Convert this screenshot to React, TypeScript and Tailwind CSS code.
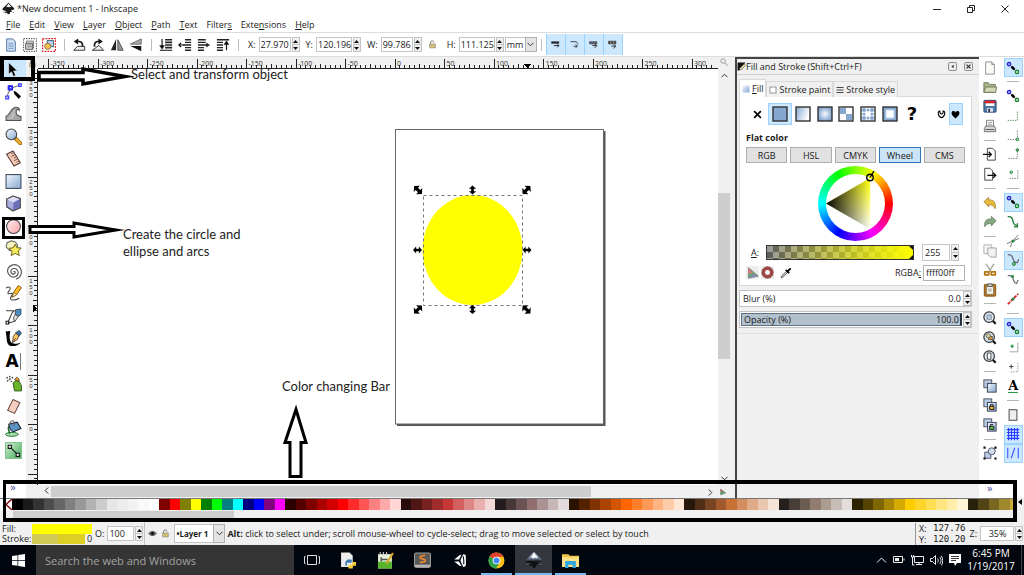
import type { ReactNode } from "react"
import clsx from "clsx"

const MENU = [
  ["", "F", "ile"],
  ["", "E", "dit"],
  ["", "V", "iew"],
  ["", "L", "ayer"],
  ["", "O", "bject"],
  ["", "P", "ath"],
  ["", "T", "ext"],
  ["Filter", "s", ""],
  ["Exte", "n", "sions"],
  ["", "H", "elp"],
]

const PALETTE =
  "000000 1a1a1a 333333 4d4d4d 666666 808080 999999 b3b3b3 cccccc e6e6e6 ececec f2f2f2 f9f9f9 ffffff 800000 ff0000 808000 ffff00 008000 00ff00 008080 00ffff 000080 0000ff 800080 ff00ff 2b0000 550000 800000 aa0000 d40000 ff0000 ff2a2a ff5555 ff8080 ffaaaa ffd5d5 280b0b 501616 782121 a02c2c c83737 d35f5f de8787 e9afaf f4d7d7 241c1c 483737 6c5353 916f6f ac9393 c8b7b7 e3dbdb 2b1100 552200 803300 aa4400 d45500 ff6600 ff7f2a ff9955 ffb380 ffccaa ffe6d5 28170b 502d16 784421 a05a2c c87137 d38d5f deaa87 e9c6af f4e3d7 241f1c 483e37 6c5d53 917c6f ac9d93 c8beb7 e3dedb 2b2200 554400 806600 aa8800 d4aa00 ffcc00 ffd42a ffdd55 ffe680 ffeeaa fff6d5 28220b 504416 786721 a0892c c8ab37".split(
    " "
  )

/* ---------- drawings ---------- */

const Svg = ({ size = 16, children }: { size?: number; children: ReactNode }) => (
  <svg width={size} height={size} viewBox="0 0 16 16" fill="none" stroke="#333" aria-hidden="true" className="shrink-0">
    {children}
  </svg>
)

const Gradients = () => (
  <svg width="0" height="0" className="absolute" aria-hidden="true">
    <defs>
      <linearGradient id="blue" x1="0" y1="0" x2="1" y2="1">
        <stop offset="0" stopColor="#f4f9ff" />
        <stop offset="1" stopColor="#85a9cf" />
      </linearGradient>
      <linearGradient id="fade" x1="0" y1="0" x2="1" y2="0.4">
        <stop offset="0" stopColor="#86aad2" />
        <stop offset="1" stopColor="#fff" />
      </linearGradient>
      <radialGradient id="glow">
        <stop offset="0" stopColor="#f4f9ff" />
        <stop offset="1" stopColor="#86a8d0" />
      </radialGradient>
      <linearGradient id="pink" x1="0" y1="0" x2="1" y2="1">
        <stop offset="0" stopColor="#fff0f0" />
        <stop offset="1" stopColor="#f9a3a8" />
      </linearGradient>
      <linearGradient id="green" x1="0" y1="0" x2="1" y2="1">
        <stop offset="0" stopColor="#d8f2da" />
        <stop offset="1" stopColor="#3fa855" />
      </linearGradient>
      <linearGradient id="yellowWhite" x1="0" y1="0" x2="0" y2="1">
        <stop offset="0" stopColor="#ff0" />
        <stop offset="1" stopColor="#fff" />
      </linearGradient>
      <linearGradient id="blackClear" x1="0" y1="0" x2="1" y2="0">
        <stop offset="0" stopColor="#000" />
        <stop offset="1" stopColor="#000" stopOpacity="0" />
      </linearGradient>
      <linearGradient id="ink" x1="0" y1="0" x2="0" y2="1">
        <stop offset="0" stopColor="#e8f0fa" />
        <stop offset="0.45" stopColor="#55657c" />
        <stop offset="0.6" stopColor="#111" />
      </linearGradient>
    </defs>
  </svg>
)

const InkscapeLogo = ({ size = 13, fill = "#1b1b1b" }: { size?: number; fill?: string }) => (
  <Svg size={size}>
    <path
      d="M8 .8 14.7 7.4c1 1.1.4 2-1 2.2l-2.6.5c-.9.3 1.8.8 1.3 1.5-.5.6-2 .3-2.5.8-.4.5.3 1.2-.2 1.8-.6.8-1.6 1.2-2.4.8-.8-.3-.4-1.2-1-1.6-.7-.4-2.8-.1-3-1 0-.6 2.8-.4 2.6-1.2-.2-.6-3.2-.6-4.6-1.2-1-.5-.8-1.6 0-2.5z"
      fill={fill}
      stroke="none"
    />
    <path d="m8 2.2 3.4 3.6-1.6.7-1-1-1 1.3-1.2-1-1.8.7z" fill="#fff" stroke="none" />
    <path d="M13 12.2h2.2l-1 1zM1.2 12.4l1.7-.3.2.9z" fill={fill} stroke="none" />
  </Svg>
)

const TOOLS: [string, ReactNode][] = [
  ["Selector", <path d="M3.500 1.500v11l2.600-2.400 1.900 4.400 2-.9-1.900-4.300h3.600z" fill="#000" stroke="#fff" strokeWidth=".5" />],
  [
    "Node editor",
    <>
      <path d="M2 14C2.500 8 5 3 14.500 2.500" stroke="#777" />
      <path d="m8 7.500 2 .5 5 4.500-2 2.500-4-4.500z" fill="#000" stroke="none" />
      <path d="M3 2.500h4v4H3z" fill="#22f" stroke="#22f" />
      <path d="M.7 12.200h2.800V15H.7zM12.800.800h2.500v2.500h-2.500z" fill="#bbf" stroke="#33f" />
      <path d="M4.500 4.500h1.500" stroke="#fff" />
    </>,
  ],
  [
    "Tweak",
    <>
      <path d="M1 14.500v-4C4 9.500 5 5 8 3c3-1.800 6-.5 5.500 2-1-1.500-3-1-3 1.500 0 2.500 2 4 4.500 4.200v3.800z" fill="#a5a5a5" stroke="#555" />
      <path d="M3 13c3-1 4-5 6-8M6 13c1.500-1 2-3 3-5" stroke="#ddd" strokeWidth=".8" />
    </>,
  ],
  [
    "Zoom",
    <>
      <path d="m10 10 4.500 4.500" stroke="#9a6a10" strokeWidth="3.600" strokeLinecap="round" />
      <path d="m10.800 10.800 3.500 3.500" stroke="#f6b030" strokeWidth="2.200" strokeLinecap="round" />
      <circle cx="6" cy="6" r="5" fill="url(#blue)" stroke="#444" />
    </>,
  ],
  [
    "Measure",
    <>
      <path d="m1.500 4 6-3 7 11-6 3z" fill="#f2c7b4" stroke="#5a3d33" />
      <path d="m8 2.500-2 1M9.200 4.500l-3 1.500M10.500 6.500l-2 1M11.700 8.500l-3 1.500M13 10.500l-2 1" stroke="#5a3d33" strokeWidth=".8" />
    </>,
  ],
  ["Rectangle", <rect x="1" y="1.500" width="14" height="13" fill="url(#blue)" stroke="#3c4a5c" />],
  [
    "3D box",
    <>
      <path d="m1.500 4 6-3L14.500 3.500v8.500l-7 3-6-4z" fill="#a9acdf" stroke="#444" />
      <path d="m1.500 4 6-3L14.500 3.500 8 7z" fill="#dcdcf5" stroke="none" />
      <path d="m8 7 6.500-3.500V12L7.500 15z" fill="#6b70b8" stroke="none" />
      <path d="m1.500 4 6-3L14.500 3.500v8.500l-7 3-6-4z" stroke="#555" />
    </>,
  ],
  ["Ellipse", <circle cx="8" cy="8" r="6.500" fill="url(#pink)" stroke="#444" />],
  [
    "Star",
    <>
      <path d="m6 .8 4 1.200 2 3.500-2.500 4-5 .5L1 6.500 2 2.500z" fill="#faf6c0" stroke="#666" />
      <path d="m9.500 4 1.800 3.300 4 .2-2.800 2.900 1 4.200-3.800-1.900-3.900 1.900.9-4.100-3-2.600 4.100-.6z" fill="#f8ee58" stroke="#665c20" strokeWidth=".9" />
    </>,
  ],
  [
    "Spiral",
    <path
      d="M8 8.500c.5-1 1.800-.3 1.500.8C9.200 10.800 7 11 6 9.600 4.900 8 6 5.500 8 5.200c2.800-.4 4.800 2 4.300 4.600C11.800 12.500 8.900 14 6.400 13 3.200 11.700 1.500 8 3 5 4.500 2 8.500.8 11.500 2.200c3 1.400 4.500 5 3.700 8.300-.8 2.500-2.700 4-4.700 4.700"
      stroke="#555"
      strokeWidth="1.100"
    />,
  ],
  [
    "Pencil",
    <>
      <path d="M1 3c2-2 5-1 3.500 1.500C3.500 6 2 7.500 3 8c2 .8 4-1 4 .5C7 10 4 12 5.500 13.500c2 1.500 6 0 8-1" stroke="#444" />
      <path d="M7 11.500 8 7l4.500-6.500 3 2L11 9z" fill="#fb2" stroke="#744c00" strokeWidth=".8" />
      <path d="M7 11.500 8 7l3 2z" fill="#fff0cc" stroke="#744c00" strokeWidth=".6" />
    </>,
  ],
  [
    "Pen",
    <>
      <path d="M1 2.500h8c-4 1.500-3.500 8-7 11.500M3 14c3-.5 5-.5 6-2" stroke="#444" />
      <path d="M1 12.500h2.500V15H1z" fill="#fff" stroke="#111" />
      <path d="m10 1.500 5-.5v5L12.500 8 9.500 6z" fill="#4f8fc0" stroke="#234" strokeWidth=".7" />
      <path d="m9.500 6 3 2L9 13 8 9.500z" fill="#e8e8e8" stroke="#333" strokeWidth=".8" />
    </>,
  ],
  [
    "Calligraphy",
    <>
      <path d="M.5 1.500 5 1c-1 5-1 10 2 11.500 2 .8 5 .5 8-1-3 4-9 4.500-11.500 2.500C1 12 2 6 .5 1.500z" fill="#000" stroke="none" />
      <path d="m10 2.500 3.500-2L15.500 3 13 6z" fill="#3a73a8" stroke="#234" strokeWidth=".7" />
      <path d="M7 12 7.800 6 10 3l3 2.500L11.500 9z" fill="#f8c860" stroke="#533" strokeWidth=".8" />
      <path d="m7.300 11.500 2.700-4" stroke="#533" strokeWidth=".7" />
    </>,
  ],
  ["Text", <></>],
  [
    "Spray",
    <>
      <path d="m7.500 7.500 3-2.500 3 1.500 2 3.500v5H9z" fill="#69b52a" stroke="#2b4d10" strokeWidth=".8" />
      <path d="M9 4.500 11 2l2 1.500.5 2.500z" fill="#f5a623" stroke="#333" strokeWidth=".7" />
      <g fill="#444" stroke="none">
        <circle cx="2" cy="2.500" r=".8" />
        <circle cx="4.500" cy="1.500" r=".8" />
        <circle cx="4.500" cy="4" r=".9" />
        <circle cx="7" cy="2.500" r=".8" />
        <circle cx="2.500" cy="5.500" r=".8" />
        <circle cx="6" cy="6" r=".7" />
      </g>
    </>,
  ],
  ["Eraser", <path d="m7.500 1.500 6.500 3-5 10-6.500-3z" fill="#f6cfc0" stroke="#6a4c40" />],
  [
    "Paint bucket",
    <>
      <ellipse cx="6.500" cy="13.500" rx="6" ry="1.800" fill="#a8e6b0" stroke="#1f6a30" strokeWidth=".9" />
      <path d="M4 13c1-3-3-5 .5-7.500" stroke="#1f6a30" strokeWidth="1.500" />
      <path d="m3.500 4 8-2 3.500 6-7 3c-2 0-4-3-4.500-7z" fill="#5a95c5" stroke="#223" />
      <path d="M4.500 5C4 1.500 7-.5 8.500 1.500V6" stroke="#666" />
    </>,
  ],
  [
    "Gradient",
    <>
      <rect x=".5" y=".5" width="15" height="15" fill="url(#green)" stroke="#7fc58b" />
      <path d="m4.500 4.500 7 7" stroke="#111" />
      <path d="M3 3h3v3H3zM10.500 10.500h3v3h-3z" fill="#fff" stroke="#111" />
    </>,
  ],
]

const Page = <path d="M3 1h7l3 3v11H3z" fill="#fbfbf6" stroke="#888" />
const Lens = (
  <>
    <path d="m11 11 3.500 3.500" stroke="#111" strokeWidth="2.500" />
    <circle cx="7" cy="7" r="6" fill="#dde8f2" stroke="#333" strokeWidth="1.400" />
  </>
)
const Stack = (
  <>
    <rect x="1" y="1" width="9" height="9" fill="#b7cde6" stroke="#445" />
    <rect x="5" y="5" width="10" height="10" fill="url(#blue)" stroke="#334" />
  </>
)

// null draws a separator line
const COMMANDS: ([string, ReactNode] | null)[] = [
  ["New", <>{Page}<path d="M10 1v3h3" stroke="#888" /></>],
  [
    "Open",
    <>
      <path d="M1 3h5l1.500 2H14v9H1z" fill="#a9b48b" stroke="#6b7550" />
      <path d="M3 8h12.500l-1 6H1z" fill="#d3dab8" stroke="#6b7550" />
    </>,
  ],
  [
    "Save",
    <>
      <rect x="1" y="1.500" width="14" height="13.500" rx="1" fill="#4f77a8" stroke="#26456e" />
      <path d="M2 2h12v3H2z" fill="#e22020" stroke="none" />
      <path d="M3 5h10v3H3z" fill="#fff" stroke="none" />
      <path d="M4.500 10.500h7v4h-7z" fill="#dde4ec" stroke="none" />
      <path d="M6 11.500h2v3H6z" fill="#223" stroke="none" />
    </>,
  ],
  [
    "Print",
    <>
      <path d="M4 1.500h8v7H4z" fill="#fff" stroke="#777" />
      <path d="M5.500 4h5M5.500 6h5" stroke="#999" />
      <path d="m3 8-1.500 3v3.500h13V11L13 8z" fill="#d5d5d5" stroke="#666" />
      <path d="M3 12h10" stroke="#555" />
    </>,
  ],
  null,
  ["Import", <><path d="M5 1.500h6l3 3V15H5z" fill="#fff" stroke="#333" /><path d="M0 8.500h9M6.500 5.500l3 3-3 3" stroke="#111" strokeWidth="1.500" /></>],
  ["Export", <><path d="M2 1.500h6l3 3V15H2z" fill="#fff" stroke="#333" /><path d="M5 9.500h9M11.500 6.500l3 3-3 3" stroke="#111" strokeWidth="1.500" /></>],
  null,
  ["Undo", <path d="M1 6.500 6.500 1.500v3C12 4 15 7 14 14.500c-1.500-3.500-4-5-7.500-4.500v2.500z" fill="#e8b93a" stroke="#97751c" strokeWidth=".8" />],
  ["Redo", <path d="M15 6.500 9.500 1.500v3C4 4 1 7 2 13.500 3.500 10.500 6 9.500 9.500 10v2.500z" fill="#86a884" stroke="#5d7c5c" strokeWidth=".8" />],
  null,
  ["Copy", <><path d="M1 1h9v10H1z" fill="#f5f5f5" stroke="#aaa" /><path d="M5.500 4.500H15V15H9l-3.500-3z" fill="#f2f2f2" stroke="#999" /></>],
  [
    "Cut",
    <>
      <path d="m3.500 1 6 9.500M12.500 1l-6 9.500" stroke="#a9a9a0" strokeWidth="1.600" />
      <path d="M2 10h4.500v3.500H2zM9.500 10H14v3.500H9.500z" stroke="#b87516" strokeWidth="2" strokeLinejoin="round" />
    </>,
  ],
  [
    "Paste",
    <>
      <rect x="1.500" y="1.500" width="13" height="13.500" rx="1" fill="#b47a24" stroke="#7a4c0c" />
      <path d="M4 4h8v9H4z" fill="#f5f2ea" stroke="#8a7a60" />
      <path d="M5.500 1h5v3h-5z" fill="#ccc" stroke="#555" />
      <path d="M6 7h4M6 9h4" stroke="#999" />
    </>,
  ],
  null,
  ["Zoom selection", <>{Lens}<path d="M4.500 4.500h5v5h-5z" fill="#b9cde0" stroke="#889" /></>],
  ["Zoom drawing", <>{Lens}<rect x="6.500" y="6" width="4" height="4" fill="#e8a838" stroke="#333" strokeWidth=".8" /><circle cx="6" cy="5.500" r="2.500" fill="#ddd09a" stroke="#444" strokeWidth=".8" /></>],
  ["Zoom page", <>{Lens}<path d="M5 3.500h4v7H5z" fill="#fff" stroke="#333" /></>],
  null,
  ["Duplicate", Stack],
  ["Clone", <>{Stack}<path d="M7.500 9.500h5V13h-5z" fill="#f6b632" stroke="#111" /><path d="M8.500 9.500v-2h3v2" stroke="#111" /></>],
  ["Unlink clone", <>{Stack}<path d="M7.500 9.500h5V13h-5z" fill="#62c04b" stroke="#111" /><path d="M8.500 9.500v-2h3" stroke="#111" /></>],
  null,
  [
    "Group",
    <>
      <path d="M2 7h7v7H2z" fill="#b9cde6" stroke="#446" />
      <circle cx="10" cy="6" r="4" fill="#cfdcec" stroke="#446" />
      <path d="M.5.5h2.500v2.500H.5zM13 .5h2.500V3H13zM.5 13H3v2.500H.5zM13 13h2.500v2.500H13z" fill="#111" stroke="none" />
    </>,
  ],
]

const SnapLink = (
  <>
    <path d="m4 4 8 8" stroke="#222" />
    <path d="m6.500 6.500 3 3" stroke="#000" strokeWidth="3" />
    <circle cx="3.500" cy="3.500" r="2" fill="#99f" stroke="#22c" strokeWidth="1.300" />
    <circle cx="12.500" cy="12.500" r="2" fill="#9d9" stroke="#1b7a35" strokeWidth="1.300" />
  </>
)
const dots = { stroke: "#667", strokeDasharray: "1.500 1.300" }

const SNAPS: ([string, ReactNode, boolean?] | null)[] = [
  ["Enable snapping", SnapLink, true],
  null,
  ["Snap bounding boxes", SnapLink],
  ["Snap box edges", <path d="M13 3v10H2" {...dots} stroke="#4c7a4c" />],
  ["Snap box corners", <><path d="M13 3v10H2" {...dots} /><circle cx="13" cy="13" r="1.600" fill="#9d9" stroke="#1b7a35" /></>],
  ["Snap edge midpoints", <><path d="M13 5v8H2" {...dots} /><circle cx="13" cy="3.500" r="1.500" fill="#6a6" stroke="#1b7a35" /></>],
  ["Snap box centers", <><path d="M13.500 4v9H4" {...dots} /><circle cx="6" cy="6" r="1.500" fill="#9d9" stroke="#1b7a35" /></>],
  null,
  ["Snap nodes", SnapLink, true],
  ["Snap paths", <path d="M2 2c9-1 3 9 10 10M9 13.500h4V9.500" stroke="#1b7a35" strokeWidth="1.500" />],
  ["Snap intersections", <><path d="M1 11 15 5M5 15C6 9 10 6 14 1" stroke="#666" /><circle cx="8" cy="8" r="1.800" fill="#2a8a45" stroke="none" /></>],
  ["Snap cusp nodes", <><path d="M2 2c9-1 3 9 11 9l1.500-4" stroke="#667" strokeWidth="1.500" /><circle cx="9" cy="12.500" r="1.800" fill="#7c7" stroke="#1b7a35" /></>, true],
  ["Snap smooth nodes", <><path d="M2 3c9-1 4 8 10 9l2-4" stroke="#667" strokeWidth="1.300" /><rect x="6" y="2.500" width="3" height="3" fill="#2a8a45" stroke="none" /></>],
  ["Snap midpoints", <><path d="M2 14 14 2" stroke="#c22" strokeWidth="2" strokeDasharray="4 1" /><circle cx="8" cy="8" r="1.800" fill="#2a8a45" stroke="none" /></>],
  null,
  ["Snap others", SnapLink, true],
  ["Snap object centers", <><path d="M13.500 3v10.500H4" stroke="#999" /><path d="M7 5v4M5 7h4" stroke="#2a9a45" strokeWidth="1.500" /></>],
  ["Snap rotation centers", <><path d="M13.500 3v10.500H4" {...dots} stroke="#888" /><path d="M6 5v5M3.500 7.500h5" stroke="#333" /></>],
  ["Snap text baselines", <></>],
  null,
  ["Snap page border", <rect x="3.500" y="2" width="9" height="12" fill="#eee" stroke="#333" />],
  ["Snap grids", <path d="M3 1v14M6.300 1v14M9.700 1v14M13 1v14M1 3h14M1 6.300h14M1 9.700h14M1 13h14" stroke="#2a3cff" strokeWidth="1.300" />, true],
  ["Snap guides", <path d="M2 2v12M14 2v12M6 14l4-12" stroke="#3a4cff" strokeWidth="1.200" />, true],
]

const TOP_ICONS: [string, ReactNode][][] = [
  [
    ["Select all in layers", <><path d="M3 1h7l3 3v11H3z" fill="#cfe0f5" stroke="#4a6c9a" /><path d="M5 6h6M5 8h6M5 10h6M5 12h6" stroke="#7b9cc8" /></>],
    ["Select all", <><rect x=".7" y=".7" width="14.600" height="14.600" stroke="#222" strokeDasharray="1.500 1.300" /><path d="M4 3.500h8v8H4z" fill="#ddd" stroke="#777" /><path d="M3 6h8v7H3z" fill="#ccc" stroke="#555" /><path d="M5 8h5M5 10h5" stroke="#888" /></>],
    ["Deselect", <><rect x=".7" y=".7" width="14.600" height="14.600" stroke="#e02020" strokeWidth="1.400" strokeDasharray="2 1.300" /><rect x="6" y="3" width="7" height="7" fill="#b9d2ee" stroke="#356" /><circle cx="6.500" cy="9.500" r="3.500" fill="#f6c14a" stroke="#864" /></>],
  ],
  [
    ["Rotate left", <><path d="M6 9.500h8.500v4.500H2z" fill="#eee" stroke="#222" /><path d="M7 .5 2 4l5 3.500z" fill="#111" stroke="none" /><path d="M6 4c5-.5 6.500 2 6 6" stroke="#222" strokeWidth="2" /></>],
    ["Rotate right", <><path d="M1.500 14 9 8.500l5.500 5.500z" fill="#eee" stroke="#222" /><path d="m8.500.500 5 3.500-5 3.500z" fill="#111" stroke="none" /><path d="M9.500 4C5 3.500 3.500 6 4 10" stroke="#222" strokeWidth="2" /></>],
    ["Flip horizontal", <><path d="M7 1v13H1z" fill="#222" stroke="none" /><path d="M9 2v12h6z" fill="#999" stroke="#444" /></>],
    ["Flip vertical", <><path d="M14 7V1L1.500 7z" fill="#aaa" stroke="#666" /><path d="M14 9v6L1.500 9z" fill="#111" stroke="none" /></>],
  ],
  [
    ["Lower to bottom", <><path d="M7 2h8M7 5h8M7 8h8M7 11h8" stroke="#222" strokeWidth="1.800" /><path d="M3.500 1v10M1.500 9l2 3 2-3zM1 14h14" stroke="#111" strokeWidth="1.300" /></>],
    ["Lower", <><path d="M8 2h7M8 5h7M6 8h9M8 11h7M8 14h7" stroke="#222" strokeWidth="1.600" /><path d="M1 8h6M3.500 5.500 1 8l2.500 2.500" stroke="#111" strokeWidth="1.400" /></>],
    ["Raise", <><path d="M1 2h9M1 5h9M1 8h13M1 11h7M1 14h7" stroke="#222" strokeWidth="1.500" /><path d="M11 6l3 2-3 2z" fill="#111" /></>],
    ["Raise to top", <><path d="M1 2h14M1 5h7M1 8h7M1 11h7M1 14h7" stroke="#222" strokeWidth="1.500" /><path d="M12 14V4M10 7l2-3 2 3z" stroke="#111" strokeWidth="1.300" /></>],
  ],
]

/* ---------- small controls ---------- */

const Spinner = () => (
  <span className="flex w-2 shrink-0 flex-col self-stretch border border-[#c4c4c4] bg-[#f0f0f0]">
    <button type="button" aria-label="Increase" className="flex flex-1 items-center justify-center border-b border-[#c4c4c4]">
      <svg width="5" height="3"><path d="M0 3h5L2.500 0z" fill="#111" /></svg>
    </button>
    <button type="button" aria-label="Decrease" className="flex flex-1 items-center justify-center">
      <svg width="5" height="3"><path d="M0 0h5L2.500 3z" fill="#111" /></svg>
    </button>
  </span>
)

const Field = ({ id, label, value, width }: { id: string; label: ReactNode; value: string; width: string }) => (
  <div className="flex items-center gap-[3px]">
    <label htmlFor={id}>{label}</label>
    <div className="flex h-[15px] items-center gap-px">
      <input id={id} defaultValue={value} className={clsx("h-full border border-[#c4c4c4] bg-white pl-px outline-none", width)} />
      <Spinner />
    </div>
  </div>
)

const Lock = () => (
  <Svg size={9}>
    <path d="M4.500 7V4.500a3 3 0 0 1 6 0" stroke="#666" strokeWidth="1.500" />
    <path d="M3 7h10v7H3z" fill="#d8c070" stroke="#777" />
  </Svg>
)

const Divider = () => <span className="h-3 w-px bg-[#bdbdbd]" />

const Chevron = () => (
  <svg width="7" height="5" viewBox="0 0 7 5" fill="none" stroke="#333" aria-hidden="true">
    <path d="m.5.8 3 3 3-3" />
  </svg>
)

/* ---------- top ---------- */

const TitleBar = () => (
  <header className="flex h-[17px] items-center bg-white pl-[2px]">
    <InkscapeLogo />
    <h1 className="ml-[2px] text-[9px]">*New document 1 - Inkscape</h1>
    <div className="ml-auto flex items-center gap-[24px] pr-[14px]">
      <button type="button" aria-label="Minimize"><svg width="10" height="10" stroke="#222"><path d="M1 5.500h8" /></svg></button>
      <button type="button" aria-label="Restore"><svg width="10" height="10" stroke="#222" fill="none"><path d="M1.500 3.500h5v5h-5zM3.500 3.500v-2h5v5h-2" /></svg></button>
      <button type="button" aria-label="Close"><svg width="10" height="10" stroke="#222"><path d="m1.500 1.500 7 7M8.500 1.500l-7 7" /></svg></button>
    </div>
  </header>
)

const MenuBar = () => (
  <nav className="flex h-[15px] items-center gap-[9px] bg-white pl-[6px]">
    {MENU.map(([before, key, after]) => (
      <button type="button" key={before + key + after}>
        {before}
        <u>{key}</u>
        {after}
      </button>
    ))}
  </nav>
)

const AffectToggle = ({ label, children }: { label: string; children: ReactNode }) => (
  <button type="button" aria-label={label} className="flex h-[21px] w-[19px] items-center justify-center border-r border-[#99d1ff] bg-[#cce8ff]">
    <Svg size={9}>{children}</Svg>
  </button>
)

const ToolBar = () => (
  <div className="flex h-[25px] items-center border-y border-[#dcdcdc] bg-white">
    {TOP_ICONS.map((group, i) => (
      <div key={i} className="flex items-center">
        <div className={clsx("flex items-center gap-[5px] pr-[8px]", i === 0 ? "pl-[4px]" : "pl-[7px]")}>
          {group.map(([label, icon]) => (
            <button type="button" key={label} aria-label={label}>
              <Svg size={14}>{icon}</Svg>
            </button>
          ))}
        </div>
        <Divider />
      </div>
    ))}
    <div className="flex items-center gap-[6px] pl-[9px]">
      <Field id="pos-x" label="X:" value="27.970" width="w-[32px]" />
      <Field id="pos-y" label="Y:" value="120.196" width="w-[36px]" />
      <Field id="size-w" label="W:" value="99.786" width="w-[32px]" />
      <button type="button" aria-label="Lock ratio"><Lock /></button>
      <div className="flex items-center gap-px pl-[4px]">
        <Field id="size-h" label="H:" value="111.125" width="w-[36px]" />
        <span className="relative flex h-[15px]">
          <select aria-label="Unit" className="w-[32px] appearance-none border border-[#c4c4c4] bg-white pl-px outline-none">
            <option>mm</option>
          </select>
          <span className="pointer-events-none absolute inset-y-0 right-0 flex w-3 items-center justify-center border border-[#b0b0b0] bg-[#e4e4e4]">
            <Chevron />
          </span>
        </span>
      </div>
    </div>
    <div className="flex items-center gap-[4px] pl-[4px]">
      <Divider />
      <div className="flex border-l border-[#99d1ff]">
        <AffectToggle label="Scale stroke width"><path d="M1 3h13v3H1z" fill="#222" /><path d="M5 10h9M11 7l3 3-3 3" stroke="#111" strokeWidth="1.500" /></AffectToggle>
        <AffectToggle label="Scale rounded corners"><path d="M1 3h8c3 0 5 2 5 5M6 11h7l-3-3M10 14l3-3" stroke="#333" strokeWidth="1.600" /></AffectToggle>
        <AffectToggle label="Move gradients"><path d="M1 3h13v4H1z" fill="#667" /><path d="M6 10h7M10 7l4 3-4 4" stroke="#222" strokeWidth="1.600" /></AffectToggle>
        <AffectToggle label="Move patterns"><path d="M1 2h13v5H1z" fill="#444" /><path d="M5 2v5M10 2v5" stroke="#ccc" /><path d="M6 11h7M10 8l4 3-4 4" stroke="#222" strokeWidth="1.600" /></AffectToggle>
      </div>
    </div>
  </div>
)

/* ---------- middle ---------- */

const More = () => <button type="button" aria-label="More" className="text-[11px] leading-none text-[#4a4a9c]">»</button>

const ToolBox = () => (
  <aside className="flex w-[26px] shrink-0 flex-col bg-white">
    <div className="flex flex-1 flex-col items-center justify-between pt-px">
      {TOOLS.map(([label, icon]) => (
        <button
          type="button"
          key={label}
          aria-label={label}
          className={clsx("flex h-[22px] w-full items-center justify-center", label === "Selector" && "bg-[#cce8ff]")}
        >
          {label === "Text" ? (
            <span className="border-r border-[#777] pr-px font-['DejaVu_Sans'] text-[17px] leading-none font-bold text-black">A</span>
          ) : (
            <Svg size={17}>{icon}</Svg>
          )}
        </button>
      ))}
    </div>
    <div className="flex h-[36px] items-end justify-center pb-[6px]">
      <More />
    </div>
  </aside>
)

const STEP = 49.5
const steps = (from: number, to: number) => Array.from({ length: to - from + 1 }, (_, i) => from + i)

const HorizontalRuler = () => (
  <svg className="h-[12px] w-full bg-[#f0f0f0]" shapeRendering="crispEdges" aria-hidden="true">
    {steps(-71, 64).map((n) => {
      const x = 357 + (n * STEP) / 10
      return <path key={n} d={`M${x} 11V${n % 10 === 0 ? 2 : n % 5 === 0 ? 7 : 8}`} stroke="#222" />
    })}
    {steps(-7, 6).map((n) => (
      <text key={n} x={359 + n * STEP} y="9" fontSize="7" fill="#333">
        {n * 50}
      </text>
    ))}
    <path d="M486 7h7l-3.500 4z" fill="#000" />
    <path d="M0 11.500h2000" stroke="#222" />
  </svg>
)

const VerticalRuler = () => (
  <svg className="h-full w-[12px] shrink-0 bg-[#f0f0f0]" shapeRendering="crispEdges" aria-hidden="true">
    {steps(-11, 71).map((n) => {
      const y = 355.5 - (n * STEP) / 10
      return <path key={n} d={`M11 ${y}H${n % 10 === 0 ? 2 : n % 5 === 0 ? 7 : 8}`} stroke="#222" />
    })}
    {steps(0, 7).map((n) => (
      <text
        key={n}
        x="5"
        y={357 - n * STEP}
        fontSize="6"
        fill="#333"
        className="font-['Liberation_Sans',sans-serif] [text-orientation:upright] [writing-mode:vertical-rl]"
      >
        {n * 50}
      </text>
    ))}
    <path d="M7 236v7l4-3.500z" fill="#000" />
    <path d="M11.500 0v2000" stroke="#222" />
  </svg>
)

const HANDLE = "M-5 0-1.500-4V-1.500H1.500V-4L5 0 1.500 4V1.500H-1.500V4z"
const HANDLES = [
  [380, 121, 45],
  [434.5, 121, 90],
  [488.5, 121, -45],
  [379.5, 181, 0],
  [489, 181, 0],
  [380, 240.5, -45],
  [434.5, 240.5, 90],
  [488.5, 240.5, 45],
]

const Drawing = () => (
  <svg className="absolute inset-0 h-full w-full bg-white" aria-hidden="true">
    <path d="M359 356h207.500V62" stroke="#555" strokeWidth="2" fill="none" />
    <rect x="357.500" y="60.500" width="208" height="294.500" fill="#fff" stroke="#666" />
    <ellipse cx="434.500" cy="181" rx="50" ry="55" fill="#ff0" />
    <rect x="385.500" y="126.500" width="99" height="110" fill="none" stroke="#777" strokeDasharray="3 3" />
    {HANDLES.map(([x, y, angle]) => (
      <path
        key={`${x}-${y}`}
        d={HANDLE}
        transform={`translate(${x} ${y}) rotate(${angle}) scale(${angle % 90 === 0 ? 0.9 : 1.1})`}
        fill="#000"
      />
    ))}
  </svg>
)

const Canvas = () => (
  <main className="flex min-w-0 flex-1 flex-col">
    <div className="flex min-h-0 flex-1">
      <div className="flex min-w-0 flex-1 flex-col">
        <div className="flex h-[12px] shrink-0">
          <span className="flex w-[12px] shrink-0 items-center justify-center bg-[#f0f0f0]"><Lock /></span>
          <HorizontalRuler />
        </div>
        <div className="flex flex-1">
          <VerticalRuler />
          <div className="relative flex-1">
            <Drawing />
          </div>
        </div>
      </div>
      <div className="flex w-[17px] flex-col items-center bg-[#f0f0f0] pt-px pr-[5px]">
        <Svg size={8}><circle cx="6" cy="6" r="4.500" stroke="#888" strokeWidth="1.500" /><path d="m10 10 5 5" stroke="#888" strokeWidth="2" /></Svg>
        <button type="button" aria-label="Scroll up" className="mt-[7px] rotate-180"><Chevron /></button>
        <div className="flex w-full flex-1 flex-col pt-[115px] pb-[117px]">
          <div className="w-full flex-1 bg-[#cdcdcd]" />
        </div>
        <button type="button" aria-label="Scroll down" className="pb-1"><Chevron /></button>
      </div>
    </div>
    <div className="flex h-[13px] shrink-0 items-center bg-[#f0f0f0] pr-[8px] pl-[16px]">
      <button type="button" aria-label="Scroll left" className="w-[9px] rotate-90"><Chevron /></button>
      <div className="h-[11px] flex-1 pr-[115px]">
        <div className="h-full bg-[#cdcdcd]" />
      </div>
      <button type="button" aria-label="Scroll right" className="w-[9px] -rotate-90"><Chevron /></button>
      <span className="ml-[4px]">
        <Svg size={8}><path d="M3 2v12l11-4z" fill="#5a9a6a" stroke="#888" /><path d="M3 2v6l5-3z" fill="#c66" stroke="none" /></Svg>
      </span>
    </div>
  </main>
)

/* ---------- fill and stroke dock ---------- */

const FILLS: [string, ReactNode][] = [
  ["Flat color", <rect x="1" y="1" width="14" height="14" fill="#86a8d0" stroke="#333" strokeWidth="1.400" />],
  ["Linear gradient", <rect x="1" y="1" width="14" height="14" fill="url(#fade)" stroke="#333" strokeWidth="1.400" />],
  ["Radial gradient", <rect x="1" y="1" width="14" height="14" fill="url(#glow)" stroke="#333" strokeWidth="1.400" />],
  ["Mesh", <><rect x="1" y="1" width="14" height="14" fill="#fff" stroke="#333" strokeWidth="1.400" /><path d="M2 2h6v6H2zM8 8h6v6H8z" fill="#86a8d0" stroke="none" /></>],
  [
    "Pattern",
    <>
      <rect x="1" y="1" width="14" height="14" fill="#fff" stroke="#333" strokeWidth="1.400" />
      <g fill="#86a8d0" stroke="none">
        <circle cx="4" cy="4" r="2" />
        <circle cx="8" cy="4" r="1.500" />
        <circle cx="12" cy="4" r="2" />
        <circle cx="4" cy="8" r="1.500" />
        <circle cx="12" cy="8" r="1.500" />
        <circle cx="4" cy="12" r="2" />
        <circle cx="8" cy="12" r="1.500" />
        <circle cx="12" cy="12" r="2" />
      </g>
    </>,
  ],
  ["Swatch", <><rect x="1" y="1" width="14" height="14" fill="#86a8d0" stroke="#333" strokeWidth="1.400" /><rect x="4" y="4" width="8" height="8" fill="#fff" stroke="#c5d6ea" /></>],
]

const ColorWheel = () => (
  <div className="relative mx-auto size-[75px] rounded-full bg-[conic-gradient(from_90deg,#f00,#f0f,#00f,#0ff,#0f0,#ff0,#f00)] p-[8px]">
    <div className="size-full rounded-full bg-white" />
    <svg className="absolute inset-0" width="75" height="75" viewBox="0 0 75 75" aria-hidden="true">
      <path d="M52.200 12 8 37.500l44.200 25.500z" fill="url(#yellowWhite)" />
      <path d="M52.200 12 8 37.500l44.200 25.500z" fill="url(#blackClear)" />
      <circle cx="52" cy="11.500" r="3.200" fill="none" stroke="#000" strokeWidth="1.400" />
      <path d="m52 11.500 4-6.500" stroke="#000" strokeWidth="1.400" />
    </svg>
  </div>
)

const Tab = ({ active, icon, children }: { active?: boolean; icon: ReactNode; children: ReactNode }) => (
  <button
    type="button"
    role="tab"
    aria-selected={!!active}
    className={clsx(
      "flex items-center gap-[2px] border border-b-0 border-[#d9d9d9] px-[2px]",
      active ? "z-10 h-[18px] bg-white" : "h-[16px] bg-[#f0f0f0]"
    )}
  >
    <Svg size={8}>{icon}</Svg>
    <span>{children}</span>
  </button>
)

const PercentRow = ({ id, label, value, filled }: { id: string; label: string; value: string; filled?: boolean }) => (
  <div className="mt-[4px] flex h-[17px] border border-[#c4c4c4] bg-white">
    <div className={clsx("m-px flex flex-1 items-center", filled && "border border-[#5f7285] border-r-2 border-r-[#26323d] bg-[#b3c1cd]")}>
      <label htmlFor={id} className="pl-[2px]">{label}</label>
      <input id={id} defaultValue={value} className="ml-auto w-[40px] bg-transparent pr-px text-right outline-none" />
    </div>
    <Spinner />
  </div>
)

const Dock = () => (
  <section className="flex w-[244px] shrink-0 flex-col border-t-2 border-l-2 border-[#444] bg-[#f0f0f0]">
    <div className="flex h-[16px] items-center border-b border-[#cfcfcf] pr-[6px]">
      <Svg size={9}>
        <path d="M1 1h14L4 15H1z" fill="#111" stroke="none" />
        <path d="m4 12 9-9 2 3-8 8z" fill="#e8dca0" stroke="#333" />
      </Svg>
      <h2 className="flex-1">Fill and Stroke (Shift+Ctrl+F)</h2>
      <button type="button" aria-label="Iconify dialog" className="mr-[7px]"><Svg size={9}><rect x="1" y="1" width="14" height="14" rx="2" strokeWidth="1.500" stroke="#777" /><path d="M10 5v6L6 8z" fill="#222" stroke="none" /></Svg></button>
      <button type="button" aria-label="Close dialog"><Svg size={9}><rect x="1" y="1" width="14" height="14" rx="2" strokeWidth="1.500" stroke="#777" /><path d="m4.500 4.500 7 7M11.500 4.500l-7 7" strokeWidth="2" stroke="#222" /></Svg></button>
    </div>
    <div className="pt-[4px] pr-[7px] pl-[2px]">
      <div role="tablist" className="flex items-end">
        <Tab active icon={<rect x="1" y="1" width="14" height="14" fill="url(#blue)" stroke="none" />}><u>F</u>ill</Tab>
        <Tab icon={<rect x="2" y="2" width="12" height="12" fill="#fff" stroke="#777" strokeWidth="1.500" />}>Stroke paint</Tab>
        <Tab icon={<path d="M1 3h14M1 8h14M1 13h14" stroke="#444" strokeWidth="2" />}>Stroke style</Tab>
      </div>
      <div className="-mt-px border border-[#d9d9d9] bg-white px-[6px] pb-[4px]">
        <div className="mt-[6px] flex h-[22px] items-center">
          <button type="button" aria-label="No paint" className="flex w-[22px] justify-center">
            <Svg size={9}><path d="m2 2 12 12M14 2 2 14" stroke="#000" strokeWidth="3" /></Svg>
          </button>
          {FILLS.map(([label, icon], i) => (
            <button
              type="button"
              key={label}
              aria-label={label}
              className={clsx("flex h-[22px] flex-1 items-center justify-center", i === 0 && "border border-[#99d1ff] bg-[#cce8ff]")}
            >
              <Svg size={16}>{icon}</Svg>
            </button>
          ))}
          <button type="button" aria-label="Unset paint" className="w-[22px] text-center font-['DejaVu_Sans'] text-[18px] leading-none font-bold text-black">?</button>
          <button type="button" aria-label="Even-odd rule" className="ml-[12px] flex h-[22px] w-[14px] items-center justify-center">
            <Svg size={9}><path d="M5 2C1.500 2 1.500 7 3.500 10c1.500 2.500 3 3.500 4.500 3.500s3-1 4.500-3.500c2-3 2-8-1.500-8 .500 2-1 5-3 5S4.500 4 5 2z" stroke="#000" strokeWidth="2" /></Svg>
          </button>
          <button type="button" aria-label="Nonzero rule" className="mr-[2px] flex h-[22px] w-[14px] items-center justify-center border border-[#99d1ff] bg-[#cce8ff]">
            <Svg size={9}><path d="M8 5C8.500 1 15 .5 15 5.500 15 10 11 12 8 15 5 12 1 10 1 5.500 1 .5 7.500 1 8 5z" fill="#000" stroke="none" /></Svg>
          </button>
        </div>
        <h3 className="mt-[6px] font-bold">Flat color</h3>
        <div className="mt-[3px] flex gap-[3px]">
          {["RGB", "HSL", "CMYK", "Wheel", "CMS"].map((mode) => (
            <button
              type="button"
              key={mode}
              className={clsx(
                "h-[16px] flex-1 border",
                mode === "Wheel" ? "border-[#2f78b8] bg-[#cce4f7]" : "border-[#adadad] bg-[#e1e1e1]"
              )}
            >
              {mode}
            </button>
          ))}
        </div>
        <div className="mt-[3px]">
          <ColorWheel />
        </div>
        <div className="mt-[3px] flex h-[17px] items-center pr-[6px] pl-[5px]">
          <label htmlFor="alpha" className="w-[15px]"><u>A</u>:</label>
          <div className="relative flex h-[15px] flex-1 border border-[#333]">
            <input
              id="alpha"
              type="range"
              min="0"
              max="255"
              defaultValue="255"
              className="m-0 w-full appearance-none bg-[linear-gradient(90deg,transparent,#ff0),repeating-conic-gradient(#5c5c5c_0_25%,#999_0_50%)] bg-[size:100%_100%,12px_12px] [&::-webkit-slider-thumb]:w-0 [&::-webkit-slider-thumb]:appearance-none"
            />
            <svg width="4" height="13" className="pointer-events-none absolute top-0 right-0"><path d="M0 0h4v4zM0 13h4V9z" fill="#111" /></svg>
          </div>
          <div className="ml-[8px] flex h-[17px] w-[37px] gap-px">
            <input aria-label="Alpha value" defaultValue="255" className="w-[28px] border border-[#c4c4c4] bg-white pl-[2px] outline-none" />
            <Spinner />
          </div>
        </div>
        <div className="mt-[3px] flex h-[17px] items-center">
          <button type="button" aria-label="Color managed" className="mr-[2px] flex size-[13px] items-center justify-center bg-[#ececec]">
            <Svg size={12}><path d="M2 1v14l13-3z" fill="#5fae6a" stroke="#777" /><path d="M2 1v8l6-1z" fill="#d77" stroke="none" /><path d="m2 15 6-6 7 3z" fill="#88b" stroke="none" /></Svg>
          </button>
          <button type="button" aria-label="Out of gamut" className="mr-[6px] flex size-[13px] items-center justify-center bg-[#ececec]">
            <Svg size={13}><circle cx="8" cy="8" r="5" fill="#fff" stroke="#a04848" strokeWidth="4" /><circle cx="8" cy="8" r="7" stroke="#844" /></Svg>
          </button>
          <button type="button" aria-label="Pick color">
            <Svg size={12}><path d="m1.500 14.500 1-3L8.500 6l1.500 1.500L4.500 13z" fill="#c8d4e0" stroke="#333" /><path d="m8.500 4.500 3 3M10.500 5.500l3-3" stroke="#000" strokeWidth="2.500" strokeLinecap="round" /></Svg>
          </button>
          <label htmlFor="rgba" className="ml-auto">RGBA<u>:</u></label>
          <input id="rgba" defaultValue="ffff00ff" className="ml-[2px] h-[16px] w-[42px] border border-[#b4b4b4] bg-white pl-[2px] outline-none" />
        </div>
      </div>
      <PercentRow id="blur" label="Blur (%)" value="0.0" />
      <PercentRow id="opacity" label="Opacity (%)" value="100.0" filled />
    </div>
    <div className="mt-[5px] border-t border-[#dedede]" />
  </section>
)

const Rail = ({ items }: { items: ([string, ReactNode, boolean?] | null)[] }) => (
  <div className="flex flex-1 flex-col items-center justify-between pt-px">
    {items.map((item, i) =>
      item ? (
        <button
          type="button"
          key={item[0]}
          aria-label={item[0]}
          className={clsx("flex h-[19px] w-[19px] items-center justify-center", item[2] && "border border-[#99d1ff] bg-[#cce8ff]")}
        >
          {item[0] === "Snap text baselines" ? (
            <span className="border-b border-[#2a9a45] font-['DejaVu_Serif'] text-[13px] leading-none font-bold text-black">A</span>
          ) : (
            <Svg size={14}>{item[1]}</Svg>
          )}
        </button>
      ) : (
        <span key={i} className="my-[4px] h-px w-[12px] bg-[#b5b5b5]" />
      )
    )}
  </div>
)

const RightRails = () => (
  <aside className="flex w-[45px] shrink-0 flex-col bg-white">
    <div className="flex flex-1 gap-[4px] px-px">
      <Rail items={COMMANDS} />
      <Rail items={SNAPS} />
    </div>
    <div className="flex h-[35px] items-end pb-[5px] pl-[8px]">
      <More />
    </div>
  </aside>
)

/* Callouts drawn over the workspace */
const Callouts = () => (
  <div className="pointer-events-none absolute inset-0 font-[Lato] text-[13px] leading-[17px] text-[#222]">
    <div className="absolute -top-px left-0 h-[25px] w-[35px] border-4 border-black" />
    <div className="absolute top-[160px] left-[2px] h-[22px] w-[23px] border-[3px] border-black" />
    <svg className="absolute inset-0 h-full w-full" fill="#fff" stroke="#000" strokeWidth="3.500" aria-hidden="true">
      <path d="M39 15.500h44v-3.500l42 7.500-42 7.500v-4H39z" strokeLinejoin="miter" strokeMiterlimit="12" />
      <path d="M30 169.500h44v-3.500l42 7-42 7v-4.500H30z" strokeWidth="3" strokeMiterlimit="12" />
      <path d="m296 352.500 10 33h-5v34h-11v-34h-5z" strokeWidth="3" strokeMiterlimit="12" />
    </svg>
    <p className="absolute top-[9px] left-[131px]">Select and transform object</p>
    <p className="absolute top-[169px] left-[123px]">
      Create the circle and
      <br />
      ellipse and arcs
    </p>
    <p className="absolute top-[321px] left-[282px]">Color changing Bar</p>
  </div>
)

/* ---------- bottom ---------- */

const Palette = () => (
  <div className="relative h-[24px] bg-[#f0f0f0]">
    <div className="flex h-[12px] border-t border-[#777] pr-[4px]">
      <button type="button" aria-label="No color" className="w-[12px] bg-white pl-[5px]">
        <svg width="7" height="11" stroke="#811" fill="none"><path d="M7 0 1 5.500 7 11" strokeWidth="1.500" /></svg>
      </button>
      {PALETTE.map((hex, i) => (
        <button type="button" key={i} aria-label={`#${hex}`} className="flex-1" style={{ backgroundColor: `#${hex}` }} />
      ))}
    </div>
    <div className="mt-px ml-[13px] h-[7px] w-[221px] bg-[#cdcdcd]" />
    <div className="pointer-events-none absolute -top-[18px] right-[7px] bottom-0 left-[3px] border-4 border-l-[3px] border-black" />
    <svg className="absolute top-0 right-0 bg-[#f0f0f0]" width="7" height="12"><path d="M5 1v6L1 4z" fill="#000" /></svg>
  </div>
)

const StatusBar = () => (
  <footer className="flex h-[23px] items-center bg-[#f0f0f0] pl-[2px]">
    <div className="grid w-[90px] grid-cols-[30px_1fr] text-[9px] leading-[10px]">
      <span>Fill:</span>
      <span className="h-[10px] bg-[#ff0]" />
      <span>Stroke:</span>
      <span className="flex h-[10px]">
        <span className="w-[26px] bg-[#d3c955]" />
        <span className="w-[27px] bg-[#dcd024]" />
        <span className="pl-[2px]">0</span>
      </span>
    </div>
    <div className="ml-[3px]">
      <Field id="opacity-status" label="O:" value="100" width="w-[27px]" />
    </div>
    <span className="ml-px h-full w-px bg-[#c4c4c4]" />
    <button type="button" aria-label="Toggle layer visibility" className="ml-[3px]">
      <Svg size={9}><path d="M1 8c3-5 11-5 14 0-3 5-11 5-14 0z" fill="#888" /><circle cx="8" cy="8" r="3" fill="#111" /></Svg>
    </button>
    <button type="button" aria-label="Toggle layer lock" className="mx-[4px]"><Lock /></button>
    <span className="relative flex h-[19px]">
      <select aria-label="Current layer" className="w-[51px] appearance-none border border-[#c4c4c4] bg-white pl-px text-[8px] font-bold outline-none">
        <option>•Layer 1</option>
      </select>
      <span className="pointer-events-none absolute inset-y-0 right-0 flex w-3 items-center justify-center border border-[#b0b0b0] bg-[#e4e4e4]">
        <Chevron />
      </span>
    </span>
    <p className="ml-[2px] flex-1 whitespace-nowrap">
      <b>Alt:</b> click to select under; scroll mouse-wheel to cycle-select; drag to move selected or select by touch
    </p>
    <dl className="grid grid-cols-[14px_auto] border-l border-[#999] pl-[3px] leading-[11px]">
      <dt>X:</dt>
      <dd className="font-['DejaVu_Sans_Mono'] text-[9px]">127.76</dd>
      <dt>Y:</dt>
      <dd className="font-['DejaVu_Sans_Mono'] text-[9px]">120.20</dd>
    </dl>
    <div className="ml-[4px] pr-px">
      <Field id="zoom" label="Z:" value="35%" width="w-[34px] text-center" />
    </div>
  </footer>
)

const TASKS: { label: string; icon: ReactNode; state?: "open" | "active" }[] = [
  {
    label: "Python",
    icon: (
      <>
        <path d="M1 .5h8l3 3V14H1z" fill="#ececec" stroke="none" />
        <path d="M7 7h4v3H6.500v3H5V9.500z" fill="#3c78b4" stroke="none" />
        <path d="M11.500 9.500h3.500v3.500h-3v2.500H8V12h3.500z" fill="#fbd23c" stroke="none" />
      </>
    ),
  },
  {
    label: "Notepad++",
    icon: (
      <>
        <path d="M1 2h13v13.500H1z" fill="#e6f2da" stroke="none" />
        <path d="M1 9h13v6.500H1z" fill="#57b52c" stroke="none" />
        <path d="M4 5v4M4 7h6" stroke="#555" strokeWidth="1.500" />
        <path d="m9 11 6-10" stroke="#d9a520" strokeWidth="2" />
        <path d="M3 0v3M6 0v3M9 0v3" stroke="#ccc" />
      </>
    ),
  },
  {
    label: "Sublime Text",
    icon: (
      <>
        <rect x=".5" y="1" width="15" height="13.500" rx="1.500" fill="#585858" stroke="#999" />
        <path d="M1 12h14v2H1z" fill="#bbb" stroke="none" />
        <path d="M10.500 3 6 4.200v1.800l4.500 1.300v1.500L5.500 10" stroke="#e8872a" strokeWidth="1.500" />
      </>
    ),
  },
  {
    label: "Unity",
    icon: (
      <g stroke="none" fill="#fff">
        <path d="M2.500 7.500 8 3l2-.5-2.500 4.500H3z" />
        <path d="M2.500 8.500 8 13l2 .5-2.500-4.500H3z" />
        <path d="m11.500 2 2 .5.5 2v7l-.5 2-2 .5L9 8.500v-1z" />
        <path d="m11.500 4 .5 3.500v4" stroke="#02060f" />
      </g>
    ),
  },
  {
    label: "Chrome",
    state: "open",
    icon: (
      <g stroke="none">
        <circle cx="8" cy="8" r="7.500" fill="#fbc116" />
        <path d="M8 8 1.500 4.200A7.500 7.500 0 0 1 14.500 4.500H8z" fill="#e33b2e" />
        <path d="M8 8 1.500 4.200A7.500 7.500 0 0 0 7.500 15.500L11 10z" fill="#2ca24c" />
        <circle cx="8" cy="8" r="3.600" fill="#fff" />
        <circle cx="8" cy="8" r="2.800" fill="#4285f4" />
      </g>
    ),
  },
  { label: "Inkscape", state: "active", icon: null },
  {
    label: "File Explorer",
    state: "open",
    icon: (
      <g stroke="none">
        <path d="M0 2h6l1.500 1.500H16V14H0z" fill="#f0c54c" />
        <path d="M0 5h16v9H0z" fill="#fbe28a" />
        <path d="M3 8.500h10V15h-3v-3H6v3H3z" fill="#2ea7e0" />
      </g>
    ),
  },
]

const TaskBar = () => (
  <div className="flex h-[30px] items-center bg-[#02060f] text-white">
    <button type="button" aria-label="Start" className="flex h-full w-[36px] items-center justify-center">
      <svg width="13" height="13" viewBox="0 0 13 13" fill="#fff"><path d="M0 2 5.500 1.200V6H0zM6.200 1.100 13 0v6H6.200zM0 6.800h5.500v4.900L0 11zM6.200 6.800H13V13l-6.800-1.100z" /></svg>
    </button>
    <input aria-label="Search" placeholder="Search the web and Windows" className="h-full w-[258px] bg-[#353535] pl-[9px] text-[11px] outline-none placeholder:text-[#a3a3a3]" />
    <button type="button" aria-label="Task view" className="flex w-[36px] justify-center">
      <svg width="16" height="12" fill="none" stroke="#ddd"><path d="M3.500 1.500h9v9h-9zM1.500 2.500h-1v7h1M14.500 2.500h1v7h-1" /></svg>
    </button>
    {TASKS.map(({ label, icon, state }) => (
      <button
        type="button"
        key={label}
        aria-label={label}
        className={clsx("relative flex h-full w-[37px] items-center justify-center", state === "active" && "bg-[#33373d]")}
      >
        {icon ? <Svg size={17}>{icon}</Svg> : <InkscapeLogo size={18} fill="url(#ink)" />}
        {state && <span className={clsx("absolute bottom-0 h-[2px] bg-[#76b9ed]", state === "active" ? "inset-x-0" : "inset-x-[3px]")} />}
      </button>
    ))}
    <div className="ml-auto flex items-center gap-[6px] pr-[2px]">
      <svg width="11" height="6" fill="none" stroke="#eee"><path d="m1 5.500 4.500-4.500L10 5.500" /></svg>
      <svg width="12" height="8" fill="none" stroke="#eee"><path d="M.5.5h9v6h-9zM11 2.500v2" /><path d="M2 2h4v3H2z" fill="#eee" stroke="none" /></svg>
      <svg width="13" height="12" fill="none" stroke="#eee"><path d="M3.500 2.500h9v6h-9zM8 8.500v2M5 10.500h6M.5 1v2h2V1M1.500 3v8h2" /></svg>
      <svg width="13" height="11" fill="none" stroke="#eee"><path d="M.5 3.500h2l3-3v9l-3-3h-2zM7.500 3.500c1 1 1 3 0 4M9.500 2c2 2 2 5 0 7M11.300.8c2 3 2 7 0 9.500" /></svg>
      <svg width="12" height="12"><path d="M0 0h12v9H8l-2 3-1-3H0z" fill="#fff" /><path d="M2 2.500h8M2 4.500h8M2 6.500h5" stroke="#333" /></svg>
      <p className="w-[48px] text-center text-[10px] leading-[13px] whitespace-nowrap">
        6:45 PM
        <br />
        1/19/2017
      </p>
      <span className="h-[30px] w-px bg-[#444]" />
    </div>
  </div>
)

const App = () => {
  return (
    <div className="flex min-h-screen flex-col bg-white font-['Open_Sans',sans-serif] text-[9px] leading-[13px] text-[#1a1a1a]">
      <Gradients />
      <TitleBar />
      <MenuBar />
      <ToolBar />
      <div className="relative flex flex-1">
        <ToolBox />
        <Canvas />
        <Dock />
        <RightRails />
        <Callouts />
      </div>
      <Palette />
      <StatusBar />
      <TaskBar />
    </div>
  )
}

export default App
